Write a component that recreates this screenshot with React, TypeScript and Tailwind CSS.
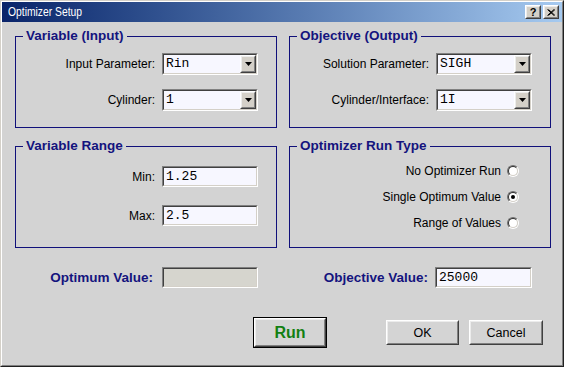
import React from "react";

const sunkenOuter =
  "border border-t-[#808080] border-l-[#808080] border-r-white border-b-white";
const sunkenInner =
  "border border-t-[#404040] border-l-[#404040] border-r-[#d4d0c8] border-b-[#d4d0c8]";
const raisedOuter =
  "border border-t-white border-l-white border-r-[#404040] border-b-[#404040]";
const raisedInner =
  "border border-t-[#ececec] border-l-[#ececec] border-r-[#808080] border-b-[#808080]";

function TitleBar() {
  return (
    <div className="h-[20px] flex items-center justify-between pl-[6px] pr-[3px] bg-gradient-to-r from-[#0a246a] to-[#a6caf0]">
      <span className="text-white text-[12px] leading-[12px] origin-left scale-x-[0.86] whitespace-nowrap">
        Optimizer Setup
      </span>
      <div className="flex gap-[2px]">
        <div className={`w-[16px] h-[14px] bg-[#d4d0c8] ${raisedOuter}`}>
          <div className={`w-full h-full flex items-center justify-center ${raisedInner}`}>
            <span className="text-[11px] leading-[10px] font-bold text-black">?</span>
          </div>
        </div>
        <div className={`w-[16px] h-[14px] bg-[#d4d0c8] ${raisedOuter}`}>
          <div className={`w-full h-full flex items-center justify-center ${raisedInner}`}>
            <svg width="8" height="7" viewBox="0 0 8 7">
              <path d="M0.5 0.5 L7 6.5 M1.5 0.5 L8 6.5 M7 0.5 L0.5 6.5 M8 0.5 L1.5 6.5" stroke="#000" strokeWidth="1" />
            </svg>
          </div>
        </div>
      </div>
    </div>
  );
}

function Group({ title, children }: { title: string; children: React.ReactNode }) {
  return (
    <fieldset className="border border-[#10107a] min-w-0">
      <legend className="ml-[7px] px-[3px] text-[13.5px] leading-[14px] font-bold text-[#14147e] whitespace-nowrap">
        {title}
      </legend>
      {children}
    </fieldset>
  );
}

function Row({ label, children }: { label: string; children: React.ReactNode }) {
  return (
    <div className="flex items-center gap-[7px]">
      <span className="text-[12px] leading-[14px] text-black whitespace-nowrap">{label}</span>
      {children}
    </div>
  );
}

function Combo({ value }: { value: string }) {
  return (
    <div className={`w-[96px] h-[22px] ${sunkenOuter}`}>
      <div className={`w-full h-full flex bg-[#f7f7ff] ${sunkenInner}`}>
        <span className="flex-1 pl-[2px] flex items-center font-['Liberation_Mono',monospace] text-[13px] leading-[14px] text-black">
          {value}
        </span>
        <div className={`w-[16px] h-full bg-[#d4d0c8] ${raisedOuter}`}>
          <div className={`w-full h-full flex items-center justify-center ${raisedInner}`}>
            <svg width="7" height="4" viewBox="0 0 7 4">
              <polygon points="0,0 7,0 3.5,4" fill="#000" />
            </svg>
          </div>
        </div>
      </div>
    </div>
  );
}

function Field({ value, disabled, wide }: { value?: string; disabled?: boolean; wide?: boolean }) {
  return (
    <div className={`${wide ? "w-[97px]" : "w-[96px]"} h-[21px] ${sunkenOuter}`}>
      <div
        className={`w-full h-full flex items-center pl-[2px] ${disabled ? "bg-[#d6d5ce]" : "bg-[#f7f7ff]"} ${sunkenInner}`}
      >
        <span className="font-['Liberation_Mono',monospace] text-[13px] leading-[14px] text-black">
          {value}
        </span>
      </div>
    </div>
  );
}

function Radio({ label, checked }: { label: string; checked?: boolean }) {
  return (
    <div className="h-[26px] flex items-center gap-[6px]">
      <span className="text-[12px] leading-[14px] text-black whitespace-nowrap">{label}</span>
      <div className="w-[12px] h-[12px] rounded-full border border-t-[#707070] border-l-[#707070] border-r-white border-b-white">
        <div className="w-full h-full rounded-full bg-white border border-t-[#303030] border-l-[#303030] border-r-[#d4d0c8] border-b-[#d4d0c8] flex items-center justify-center">
          {checked ? <div className="w-[4px] h-[4px] rounded-full bg-black" /> : null}
        </div>
      </div>
    </div>
  );
}

function Button({
  label,
  w,
  main,
}: {
  label: string;
  w: string;
  main?: boolean;
}) {
  if (main) {
    return (
      <div className={`${w} h-[31px] border border-black`}>
        <div className={`w-full h-full bg-[#d4d4d4] ${raisedOuter}`}>
          <div className={`w-full h-full flex items-center justify-center ${raisedInner}`}>
            <span className="text-[16px] leading-[18px] font-bold text-[#128012]">{label}</span>
          </div>
        </div>
      </div>
    );
  }
  return (
    <div className={`${w} h-[25px] bg-[#d4d4d4] ${raisedOuter}`}>
      <div className={`w-full h-full flex items-center justify-center ${raisedInner}`}>
        <span className="text-[12.5px] leading-[14px] text-black">{label}</span>
      </div>
    </div>
  );
}

export default function App() {
  return (
    <div className="w-[564px] h-[367px] border border-t-[#d4d0c8] border-l-[#d4d0c8] border-r-[#202020] border-b-[#202020] font-['Liberation_Sans',Arial,sans-serif] text-black select-none">
      <div className="w-full h-full flex flex-col border border-t-white border-l-white border-r-[#808080] border-b-[#808080] bg-[#d3d3d3]">
        <TitleBar />
        <div className="pl-[13px] pt-[7px]">
          <div className="grid grid-cols-[262px_262px] gap-x-[12px] gap-y-[11px]">
            <Group title="Variable (Input)">
              <div className="flex flex-col items-end pr-[18px] pt-[10px] pb-[16px] gap-[14px]">
                <Row label="Input Parameter:">
                  <Combo value="Rin" />
                </Row>
                <Row label="Cylinder:">
                  <Combo value="1" />
                </Row>
              </div>
            </Group>
            <Group title="Objective (Output)">
              <div className="flex flex-col items-end pr-[18px] pt-[10px] pb-[16px] gap-[14px]">
                <Row label="Solution Parameter:">
                  <Combo value="SIGH" />
                </Row>
                <Row label="Cylinder/Interface:">
                  <Combo value="1I" />
                </Row>
              </div>
            </Group>
            <Group title="Variable Range">
              <div className="flex flex-col items-end pr-[18px] pt-[13px] pb-[21px] gap-[18px]">
                <Row label="Min:">
                  <Field value="1.25" />
                </Row>
                <Row label="Max:">
                  <Field value="2.5" />
                </Row>
              </div>
            </Group>
            <Group title="Optimizer Run Type">
              <div className="flex flex-col items-end pr-[31px] pt-[5px] pb-[11px]">
                <Radio label="No Optimizer Run" />
                <Radio label="Single Optimum Value" checked />
                <Radio label="Range of Values" />
              </div>
            </Group>
          </div>
          <div className="grid grid-cols-[262px_262px] gap-x-[12px] mt-[19px]">
            <div className="flex items-center justify-end gap-[9px] pr-[19px]">
              <span className="text-[13.5px] leading-[14px] font-bold text-[#14147e] whitespace-nowrap">
                Optimum Value:
              </span>
              <Field disabled />
            </div>
            <div className="flex items-center justify-end gap-[7px] pr-[19px]">
              <span className="text-[13.5px] leading-[14px] font-bold text-[#14147e] whitespace-nowrap">
                Objective Value:
              </span>
              <Field value="25000" wide />
            </div>
          </div>
          <div className="flex items-center pl-[238px] mt-[29px]">
            <Button label="Run" w="w-[74px]" main />
            <div className="ml-[59px]">
              <Button label="OK" w="w-[73px]" />
            </div>
            <div className="ml-[10px]">
              <Button label="Cancel" w="w-[74px]" />
            </div>
          </div>
        </div>
      </div>
    </div>
  );
}
